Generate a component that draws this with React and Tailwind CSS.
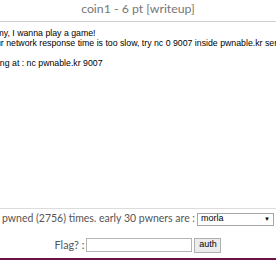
export default function App() {
  return (
    <div className="w-[276px] h-[260px] overflow-hidden bg-white flex flex-col">
      <div className="h-[21px] pt-[1px] flex items-start justify-center font-['Lato',sans-serif] text-[12.3px] leading-[15px] text-[#777] whitespace-nowrap">
        coin1 - 6 pt [writeup]
      </div>
      <div className="h-px bg-[#cfcfcf]" />
      <div className="mt-[6px] overflow-hidden">
        <div className="ml-[-23px] font-['Liberation_Sans',Arial,sans-serif] text-[8.75px] leading-[10px] text-black whitespace-nowrap">
          <div>Mommy, I wanna play a game!</div>
          <div>(if your network response time is too slow, try nc 0 9007 inside pwnable.kr server)</div>
          <div>&nbsp;</div>
          <div>Running at : nc pwnable.kr 9007</div>
        </div>
      </div>
      <div className="flex-1" />
      <div className="h-px bg-[#dcdcdc]" />
      <div className="h-[18px] mt-[1px] flex items-center justify-end pr-[2px] overflow-hidden whitespace-nowrap">
        <span className="font-['Lato',sans-serif] text-[10.5px] text-[#555] mr-[2px]">
          coin1 was pwned (2756) times. early 30 pwners are :
        </span>
        <div className="w-[77px] h-[13px] shrink-0 border border-[#a6a6a6] bg-white flex items-center justify-between px-[3px] font-['Liberation_Sans',Arial,sans-serif] text-[9px] text-black">
          <span>morla</span>
          <span className="text-[6px]">▼</span>
        </div>
      </div>
      <div className="h-[16px] mt-[9px] flex items-center justify-center whitespace-nowrap">
        <span className="font-['Lato',sans-serif] text-[10.8px] text-[#555] mr-[2px]">Flag? :</span>
        <div className="w-[106px] h-[14px] border border-[#b5b5b5] bg-white" />
        <div className="ml-[2px] w-[27px] h-[15px] border border-[#b0b0b0] bg-[#ececec] flex items-center justify-center font-['Liberation_Sans',Arial,sans-serif] text-[9px] text-black">
          auth
        </div>
      </div>
      <div className="h-[5px]" />
      <div className="h-[2px] bg-[#6b1146]" />
    </div>
  );
}
